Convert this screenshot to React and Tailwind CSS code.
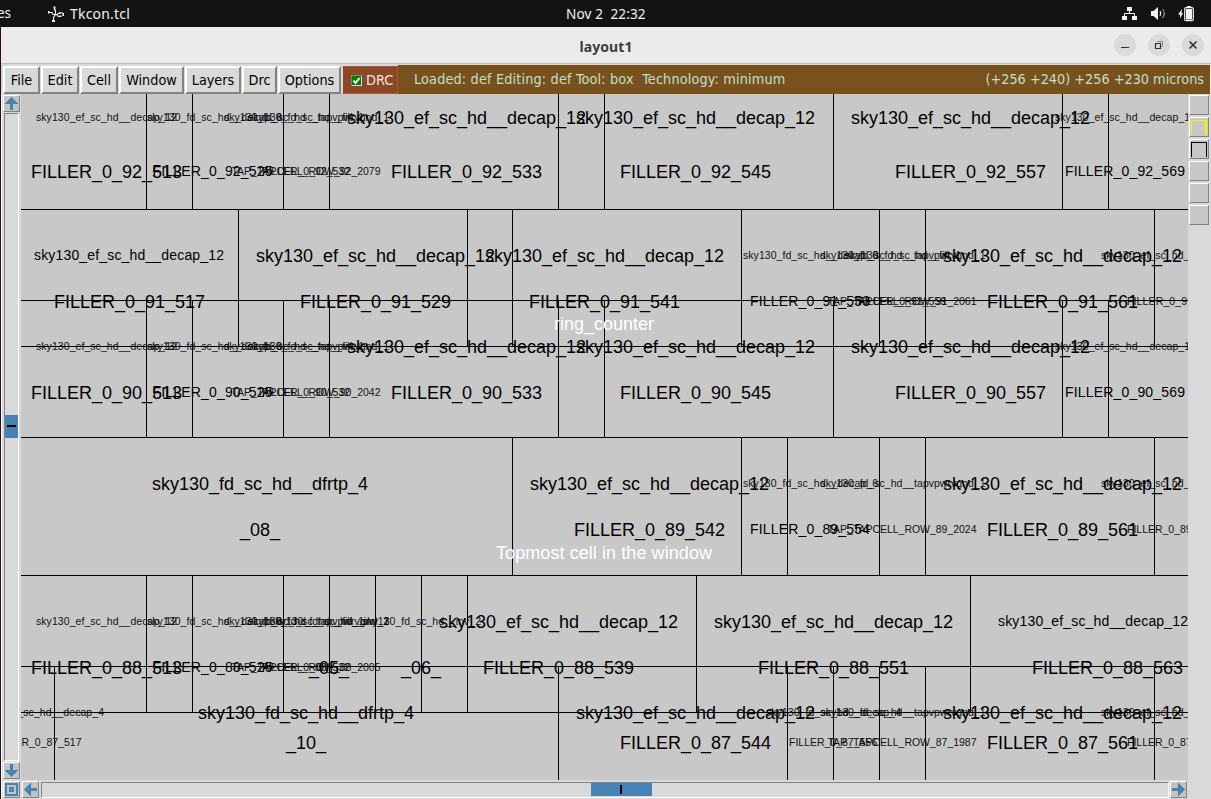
const EF12 = "sky130_ef_sc_hd__decap_12";
const FD6 = "sky130_fd_sc_hd__decap_6";
const FD4 = "sky130_fd_sc_hd__decap_4";
const TAPV = "sky130_fd_sc_hd__tapvpwrvgnd_1";
const FILL1 = "sky130_fd_sc_hd__fill_1";
const INV2 = "sky130_fd_sc_hd__inv_2";
const DFF = "sky130_fd_sc_hd__dfrtp_4";

// Label sizes: font size and baseline shift relative to the large label
const SIZES = {
  L: { size: 18, dy: 0 },
  M: { size: 14, dy: -2 },
  S: { size: 10.5, dy: -3 },
};

const evenRow = (n, tap) => ({
  cells: [
    ["S", 36, 141, EF12],
    ["S", 147, 135, FD6],
    ["S", 224, 165, TAPV],
    ["S", 248, 116, FILL1],
    ["L", 347, 239, EF12],
    ["L", 576, 239, EF12],
    ["L", 851, 239, EF12],
    ["S", 1055, 141, EF12],
  ],
  names: [
    ["L", 31, 151, `FILLER_0_${n}_513`],
    ["M", 152.5, 120, `FILLER_0_${n}_525`],
    ["S", 231.5, 149, `TAP_TAPCELL_ROW_${n}_${tap}`],
    ["S", 262, 88, `FILLER_0_${n}_532`],
    ["L", 391, 151, `FILLER_0_${n}_533`],
    ["L", 620, 151, `FILLER_0_${n}_545`],
    ["L", 895, 151, `FILLER_0_${n}_557`],
    ["M", 1065, 120, `FILLER_0_${n}_569`],
  ],
});

const ROWS = [
  { cellY: 124, nameY: 178, ...evenRow(92, 2079) },
  {
    cellY: 262,
    nameY: 308,
    cells: [
      ["M", 34, 190, EF12],
      ["L", 256, 239, EF12],
      ["L", 485, 239, EF12],
      ["S", 743, 135, FD6],
      ["S", 820.5, 165, TAPV],
      ["S", 845, 116, FILL1],
      ["L", 943, 239, EF12],
      ["S", 1101, 141, EF12],
    ],
    names: [
      ["L", 54, 151, "FILLER_0_91_517"],
      ["L", 300, 151, "FILLER_0_91_529"],
      ["L", 529, 151, "FILLER_0_91_541"],
      ["M", 750, 120, "FILLER_0_91_553"],
      ["S", 827.5, 149, "TAP_TAPCELL_ROW_91_2061"],
      ["S", 858, 88, "FILLER_0_91_559"],
      ["L", 987, 151, "FILLER_0_91_561"],
      ["S", 1127, 90, "FILLER_0_91_573"],
    ],
  },
  { cellY: 353, nameY: 399, ...evenRow(90, 2042) },
  {
    cellY: 490,
    nameY: 536,
    cells: [
      ["L", 152, 216, DFF],
      ["L", 530, 239, EF12],
      ["S", 743, 135, FD6],
      ["S", 820.5, 165, TAPV],
      ["L", 943, 239, EF12],
      ["S", 1101, 141, EF12],
    ],
    names: [
      ["L", 240, 40, "_08_"],
      ["L", 574, 151, "FILLER_0_89_542"],
      ["M", 750, 120, "FILLER_0_89_554"],
      ["S", 827.5, 149, "TAP_TAPCELL_ROW_89_2024"],
      ["L", 987, 151, "FILLER_0_89_561"],
      ["S", 1127, 88, "FILLER_0_89_573"],
    ],
  },
  {
    cellY: 628,
    nameY: 674,
    cells: [
      ["S", 36, 141, EF12],
      ["S", 147, 135, FD6],
      ["S", 224, 165, TAPV],
      ["S", 248, 116, FILL1],
      ["S", 270, 119, INV2],
      ["S", 362, 119, INV2],
      ["L", 439, 239, EF12],
      ["L", 714, 239, EF12],
      ["M", 998, 190, EF12],
    ],
    names: [
      ["L", 31, 151, "FILLER_0_88_513"],
      ["M", 152.5, 120, "FILLER_0_88_525"],
      ["S", 231.5, 149, "TAP_TAPCELL_ROW_88_2005"],
      ["S", 262, 88, "FILLER_0_88_532"],
      ["L", 309, 40, "_05_"],
      ["L", 401, 40, "_06_"],
      ["L", 483, 151, "FILLER_0_88_539"],
      ["L", 758, 151, "FILLER_0_88_551"],
      ["L", 1032, 151, "FILLER_0_88_563"],
    ],
  },
  {
    cellY: 719,
    nameY: 749,
    cells: [
      ["S", -31, 135, FD4],
      ["L", 198, 216, DFF],
      ["L", 576, 239, EF12],
      ["S", 766, 135, FD4],
      ["S", 820.5, 165, TAPV],
      ["L", 943, 239, EF12],
      ["S", 1101, 141, EF12],
    ],
    names: [
      ["S", -6.5, 88, "FILLER_0_87_517"],
      ["L", 286, 40, "_10_"],
      ["L", 620, 151, "FILLER_0_87_544"],
      ["S", 789, 88, "FILLER_0_87_556"],
      ["S", 827.5, 149, "TAP_TAPCELL_ROW_87_1987"],
      ["L", 987, 151, "FILLER_0_87_561"],
      ["S", 1127, 88, "FILLER_0_87_573"],
    ],
  },
];

const H_LINES = [209, 300, 346, 437, 575, 666, 712];
const V_LINES = [
  [94, 209, [146, 192, 283, 329, 558, 604, 833, 1062, 1108]],
  [209, 346, [238, 467, 512, 741, 879, 925, 1154]],
  [300, 437, [146, 192, 283, 329, 558, 604, 833, 1062, 1108]],
  [437, 575, [512, 741, 787, 879, 925, 1154]],
  [575, 712, [146, 192, 283, 329, 375, 421, 467, 696, 970]],
  [666, 780, [54, 558, 787, 833, 879, 925, 1154]],
];

function Label({ kind, x, w, y, children, fill = "#000" }) {
  const { size, dy } = SIZES[kind];
  return (
    <text x={x} y={y + dy} fontSize={size} textLength={w} fill={fill} opacity={kind === "S" ? 0.9 : 1}>
      {children}
    </text>
  );
}

function LayoutCanvas() {
  return (
    <svg
      viewBox="21 94 1167 686"
      className="block h-[686px] w-[1167px] bg-[#c8c8c8] font-['Liberation_Sans',sans-serif]"
    >
      <g shapeRendering="crispEdges">
        {H_LINES.map((y) => (
          <rect key={y} x="21" y={y} width="1167" height="1" />
        ))}
        {V_LINES.map(([y1, y2, xs]) =>
          xs.map((x) => <rect key={`${x}-${y1}`} x={x} y={y1} width="1" height={y2 - y1} />)
        )}
      </g>
      {ROWS.map((row) => (
        <g key={row.cellY}>
          {row.cells.map(([k, x, w, t]) => (
            <Label key={`${x}${t}`} kind={k} x={x} w={w} y={row.cellY}>{t}</Label>
          ))}
          {row.names.map(([k, x, w, t]) => (
            <Label key={`${x}${t}`} kind={k} x={x} w={w} y={row.nameY}>{t}</Label>
          ))}
        </g>
      ))}
      <Label kind="L" x={554} w={100} y={330} fill="#fff">ring_counter</Label>
      <Label kind="L" x={496} w={216} y={559} fill="#fff">Topmost cell in the window</Label>
    </svg>
  );
}

function TopBar() {
  return (
    <div className="flex h-[27px] w-full shrink-0 items-center bg-[#131313] font-['Noto_Sans',sans-serif] text-[14px] leading-[27px] whitespace-pre text-[#f2f2f2]">
      <div className="flex w-[566px] items-center">
        <span className="-ml-[3px] w-[51px] shrink-0 text-[13.5px]">es</span>
        <svg viewBox="0 0 16 16" className="mr-[6px] h-4 w-4" fill="none" stroke="#f2f2f2" strokeWidth="1.1">
          <path d="M1 6.500h3l1 2h4l2-1.500h4M6.500 2v2h1v4.500l-2 3V14M8.500 8.500l2 2.500M12 6v2" />
          <g fill="#f2f2f2" stroke="none">
            <path d="M0 5h1.500v2.500H0zM5.500 .5h2v2h-2zM4 14h3v2H4zM14.500 7h1.500v3h-1.500zM10.500 9.500h3v1.500h-3z" />
          </g>
        </svg>
        <span className="text-[14px] tracking-[0.2px]">Tkcon.tcl</span>
      </div>
      <span className="w-[556px] text-[13.6px] tracking-[0.12px]">Nov 2  22:32</span>
      <div className="flex items-center">
        <svg viewBox="0 0 16 16" className="h-4 w-4" fill="#f2f2f2">
          <path d="M5 1h5v4H5zM0 10h5v4H0zM10 10h5v4h-5z" />
          <path d="M7.500 5v2.500M2.500 10V7.500h10V10" fill="none" stroke="#f2f2f2" />
        </svg>
        <svg viewBox="0 0 16 16" className="ml-[13px] h-4 w-4" fill="#f2f2f2">
          <path d="M0 5h2.500L7 1v13L2.500 10H0z" />
          <path d="M9 5.200q1.500 2.300 0 4.600" fill="none" stroke="#f2f2f2" strokeWidth="1.300" />
          <path d="M11.500 3q3.500 4.500 0 9" fill="none" stroke="#888" strokeWidth="1.200" />
        </svg>
        <svg viewBox="0 0 17 16" className="ml-[11px] h-4 w-[17px]" fill="#f2f2f2">
          <path d="M4 3 0 8.500h2V12.500L5 7H3.500z" />
          <path d="M9 0h4v2H9z" />
          <rect x="6.700" y="1.700" width="8.600" height="13" rx="1.500" fill="none" stroke="#f2f2f2" strokeWidth="1.200" />
          <rect x="8" y="3" width="6" height="10.500" />
        </svg>
      </div>
    </div>
  );
}

function TitleButton({ children }) {
  return (
    <div className="flex h-[22px] w-[22px] items-center justify-center rounded-full bg-[#dadada]">
      <svg viewBox="0 0 22 22" className="h-[22px] w-[22px]" fill="none" stroke="#2d2d2d">{children}</svg>
    </div>
  );
}

function TitleBar() {
  return (
    <div className="grid h-[37px] shrink-0 grid-cols-[1fr_auto_1fr] items-center border-b border-[#bdbdbd] bg-[#ebebeb]">
      <span />
      <span className="pt-[2px] font-['Noto_Sans',sans-serif] text-[14px] font-bold tracking-[0.1px] text-[#3d3d3d]">layout1</span>
      <div className="flex justify-end gap-3 pr-[7px]">
        <TitleButton><path d="M7 13.500h8" /></TitleButton>
        <TitleButton>
          <path d="M7.500 9.500h5v5h-5z" strokeWidth="1.200" />
          <path d="M9 7.500h5.500V13" stroke="#888" />
        </TitleButton>
        <TitleButton><path d="m7.500 7.500 7 7M14.500 7.500l-7 7" strokeWidth="1.500" /></TitleButton>
      </div>
    </div>
  );
}

const RAISED = "border-2 border-t-white border-l-white border-r-[#828282] border-b-[#828282]";

function MenuBar() {
  const menus = [
    ["File", "w-[37px]"],
    ["Edit", "w-[38px]"],
    ["Cell", "w-[38px]"],
    ["Window", "w-[65px]"],
    ["Layers", "w-[56px]"],
    ["Drc", "w-[35px]"],
    ["Options", "w-[63px]"],
  ];
  return (
    <div className="flex h-[30px] shrink-0 bg-[#d9d9d9] pt-px pl-[2px] font-['DejaVu_Sans_Condensed','DejaVu_Sans',sans-serif] text-[14.3px] leading-none font-stretch-condensed whitespace-pre">
      <div className="flex gap-px pt-px">
        {menus.map(([name, width]) => (
          <div
            key={name}
            className={`flex h-7 items-center justify-center bg-[#d9d9d9] text-black ${RAISED} ${width}`}
          >
            <span>{name}</span>
          </div>
        ))}
      </div>
      <div className="mt-px ml-px flex h-7 w-[56px] items-center border border-l-[#d9d9d9] border-[#a5593a] bg-[#8b4726] pl-[8px] text-[#f3e8e0]">
        <svg viewBox="0 0 11 11" className="mr-[4px] h-[11px] w-[11px] shrink-0">
          <path d="M0 0h11v11H0z" fill="#d9d9d9" />
          <path d="M0 0h11v1H1v10H0z" fill="#828282" />
          <path d="M1 1h9v9H1z" fill="#008000" />
          <path d="m2.500 5.500 2 2.500 4-5" fill="none" stroke="#fff" strokeWidth="2" />
        </svg>
        <span>DRC</span>
      </div>
      <div className="flex h-[29px] grow items-center justify-between bg-[#79511d] pr-[6px] pl-4 text-[#bfe0cd]">
        <span className="tracking-[0.16px]">Loaded: def Editing: def Tool: box  Technology: minimum</span>
        <span>(+256 +240) +256 +230 microns</span>
      </div>
    </div>
  );
}

function ScrollButton({ children }) {
  return (
    <div className="h-[17px] w-[17px] shrink-0 border border-t-white border-l-white border-r-[#828282] border-b-[#828282] bg-[#c3c3c3]">
      <svg viewBox="0 0 15 15" className="h-[15px] w-[15px]" fill="#4682b4" shapeRendering="crispEdges">{children}</svg>
    </div>
  );
}

const SUNKEN = "border border-t-[#828282] border-l-[#828282] border-r-white border-b-white";

function LeftScroll() {
  return (
    <div className="flex h-[686px] w-5 shrink-0 flex-col items-start border-l border-white bg-[#d9d9d9] pt-px pl-px">
      <ScrollButton><path d="M7.500 1 14 8h-5v5.500H6V8H1z" /></ScrollButton>
      <div className={`mt-px ml-px flex h-[648px] w-[15px] flex-col bg-[#d9d9d9] pt-[301px] ${SUNKEN}`}>
        <div className="flex h-[23px] w-[13px] items-center justify-center bg-[#4682b4]">
          <div className="h-[2px] w-[9px] -translate-y-px bg-black" />
        </div>
      </div>
      <div className="mt-px"><ScrollButton><path d="M6 1h3v6h5L7.500 14 1 7h5z" /></ScrollButton></div>
    </div>
  );
}

function BottomScroll() {
  return (
    <div className="flex h-[19px] shrink-0 items-start border-l border-white bg-[#d9d9d9] pt-px pl-px">
      <ScrollButton>
        <path fillRule="evenodd" d="M1 1h13v13H1zM3 3h9v9H3zM5 5v5h5V5zM7 7h1v1H7z" />
      </ScrollButton>
      <div className="ml-[2px]"><ScrollButton><path d="M1 7.500 8 1v5h6v3H8v5z" /></ScrollButton></div>
      <div className={`mt-px ml-[2px] flex h-4 w-[1128px] bg-[#d9d9d9] pl-[549px] ${SUNKEN}`}>
        <div className="flex h-[13px] w-[61px] items-center bg-[#4682b4] pl-[29px]">
          <div className="h-[9px] w-[2px] bg-black" />
        </div>
      </div>
      <div className="ml-[1px]"><ScrollButton><path d="M14 7.500 7 1v5H1v3h6v5z" /></ScrollButton></div>
    </div>
  );
}

function ToolPalette() {
  const inner = ["", "border-t border-l border-r-2 border-[#f5f500]", "border-t border-x border-black", "", "", ""];
  return (
    <div className="flex w-[22px] shrink-0 flex-col gap-[2px] bg-[#d9d9d9] pt-px pl-px">
      {inner.map((mark, i) => (
        <div
          key={i}
          className="flex h-5 w-5 items-center justify-center border border-t-white border-l-white border-r-[#828282] border-b-[#828282] bg-[#c8c8c8]"
        >
          <div className={`h-[15px] w-4 ${mark}`} />
        </div>
      ))}
    </div>
  );
}

export default function App() {
  return (
    <div className="flex h-[799px] w-[1211px] flex-col overflow-hidden bg-[#d9d9d9]">
      <TopBar />
      <div className="flex h-[772px] flex-col border-l border-[#2c0a1e]">
        <TitleBar />
        <div className="flex flex-col border-r border-[#ebebeb]">
          <MenuBar />
        </div>
        <div className="flex">
          <div className="flex w-[1187px] shrink-0 flex-col">
            <div className="flex">
              <LeftScroll />
              <LayoutCanvas />
            </div>
            <BottomScroll />
          </div>
          <ToolPalette />
        </div>
      </div>
    </div>
  );
}
